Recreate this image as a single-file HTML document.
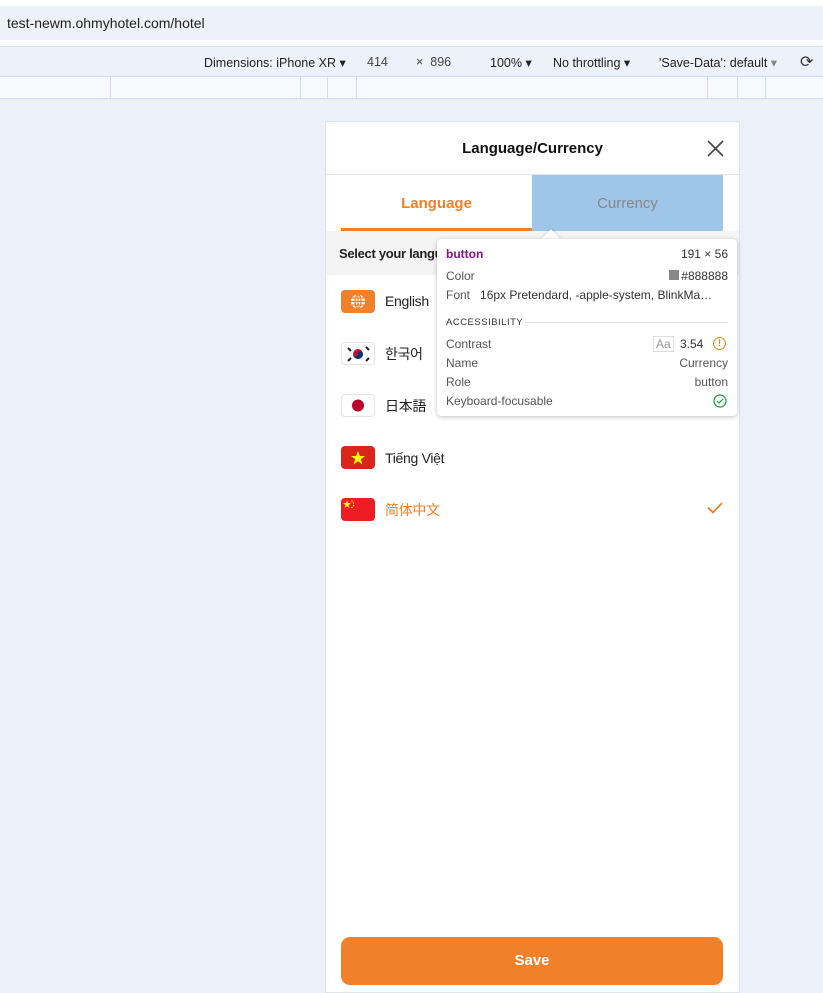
<!DOCTYPE html><html><head><style>
*{margin:0;padding:0;box-sizing:border-box}
body{width:823px;height:993px;background:#ecf0f8;font-family:"Liberation Sans","Noto Sans CJK KR",sans-serif;position:relative;overflow:hidden}
.a{position:absolute}
.flag{position:absolute;left:341px;width:34px;height:23px;border-radius:4px;overflow:hidden}
.lbl{position:absolute;left:385px;font-size:14px;color:#222;letter-spacing:-0.3px}
.tt{font-size:12px;color:#555}
</style></head><body>
<div class="a" style="left:0;top:0;width:823px;height:6px;background:#fff"></div>
<div class="a" style="left:0;top:6px;width:823px;height:34px;background:#edf1f9"></div>
<div class="a" style="left:7px;top:15px;font-size:14px;color:#222">test-newm.ohmyhotel.com/hotel</div>
<div class="a" style="left:0;top:40px;width:823px;height:6px;background:#fff"></div>
<div class="a" style="left:0;top:46px;width:823px;height:30px;background:#edf1f9;border-top:1px solid #dde2ea"></div>
<div class="a" style="left:204px;top:55px;font-size:12.5px;color:#222;white-space:nowrap">Dimensions: iPhone XR ▾</div>
<div class="a" style="left:367px;top:55px;font-size:12.5px;color:#444;white-space:nowrap">414</div>
<div class="a" style="left:416px;top:55px;font-size:12.5px;color:#444;white-space:nowrap">×&nbsp; 896</div>
<div class="a" style="left:490px;top:55px;font-size:12.5px;color:#222;white-space:nowrap">100% ▾</div>
<div class="a" style="left:553px;top:55px;font-size:12.5px;color:#222;white-space:nowrap">No throttling ▾</div>
<div class="a" style="left:659px;top:55px;font-size:12.5px;color:#222;white-space:nowrap">'Save-Data': default <span style="color:#888">▾</span></div>
<div class="a" style="left:800px;top:52px;font-size:16px;color:#333">⟳</div>
<div class="a" style="left:0;top:76px;width:823px;height:23px;background:#f7f9fd;border-top:1px solid #cfdcf2;border-bottom:1px solid #cfdcf2"></div>
<div class="a" style="left:110px;top:77px;width:1px;height:21px;background:#cfdcf2"></div>
<div class="a" style="left:300px;top:77px;width:1px;height:21px;background:#cfdcf2"></div>
<div class="a" style="left:327px;top:77px;width:1px;height:21px;background:#cfdcf2"></div>
<div class="a" style="left:356px;top:77px;width:1px;height:21px;background:#cfdcf2"></div>
<div class="a" style="left:707px;top:77px;width:1px;height:21px;background:#cfdcf2"></div>
<div class="a" style="left:737px;top:77px;width:1px;height:21px;background:#cfdcf2"></div>
<div class="a" style="left:765px;top:77px;width:1px;height:21px;background:#cfdcf2"></div>

<div class="a" style="left:325px;top:121px;width:415px;height:872px;background:#fff;border:1px solid #dfe3ea"></div>
<div class="a" style="left:325px;top:140px;width:415px;text-align:center;font-size:15px;font-weight:bold;color:#111">Language/Currency</div>
<svg class="a" style="left:707px;top:140px" width="17" height="17"><path d="M1 1L16 16M16 1L1 16" stroke="#444" stroke-width="1.6"/></svg>
<div class="a" style="left:326px;top:174px;width:413px;height:1px;background:#e5e5e5"></div>
<div class="a" style="left:341px;top:195px;width:191px;text-align:center;font-size:15px;font-weight:bold;color:#f0812a">Language</div>
<div class="a" style="left:341px;top:228px;width:191px;height:3px;background:#f0812a"></div>
<div class="a" style="left:532px;top:175px;width:191px;height:56px;background:#9fc5e8"></div>
<div class="a" style="left:532px;top:195px;width:191px;text-align:center;font-size:15px;color:#888">Currency</div>
<div class="a" style="left:326px;top:231px;width:413px;height:44px;background:#f4f4f4"></div>
<div class="a" style="left:339px;top:246px;font-size:13px;font-weight:bold;color:#222;letter-spacing:-0.3px">Select your langu</div>

<div class="flag" style="top:290px;background:#f0812a"><svg width="34" height="23"><circle cx="17" cy="11.5" r="7" fill="#fff"/><g stroke="#f0812a" stroke-width="1.2" fill="none"><ellipse cx="17" cy="11.5" rx="3" ry="7"/><path d="M10 11.5H24M11 8H23M11 15H23M17 4.5V18.5"/></g></svg></div>
<div class="lbl" style="top:293px">English</div>
<div class="flag" style="top:342px;border:1px solid #e5e5e5;background:#fff"><svg width="34" height="23"><circle cx="16" cy="11" r="5" fill="#c60c30"/><path d="M11 11a5 5 0 0 0 10 0a2.5 2.5 0 0 0-5 0a2.5 2.5 0 0 1-5 0z" fill="#003478"/><g stroke="#222" stroke-width="2"><path d="M6 5l3 3M24 4l3 3M6 18l3-3M24 18l3-3"/></g></svg></div>
<div class="lbl" style="top:344px">한국어</div>
<div class="flag" style="top:394px;border:1px solid #e5e5e5;background:#fff"><svg width="34" height="23"><circle cx="16" cy="10.5" r="6" fill="#bc002d"/></svg></div>
<div class="lbl" style="top:396px">日本語</div>
<div class="flag" style="top:446px;background:#da251d"><svg width="34" height="23"><polygon points="17,5 18.8,10 24,10 19.8,13.2 21.4,18.5 17,15.3 12.6,18.5 14.2,13.2 10,10 15.2,10" fill="#ffff00"/></svg></div>
<div class="lbl" style="top:450px">Tiếng Việt</div>
<div class="flag" style="top:498px;background:#ee1c25"><svg width="34" height="23"><polygon points="6,2 7,5 10,5 7.6,7 8.5,10 6,8.2 3.5,10 4.4,7 2,5 5,5" fill="#ff0"/><circle cx="11" cy="3" r=".8" fill="#ff0"/><circle cx="12.5" cy="5" r=".8" fill="#ff0"/><circle cx="12.5" cy="7.5" r=".8" fill="#ff0"/><circle cx="11" cy="9.5" r=".8" fill="#ff0"/></svg></div>
<div class="lbl" style="top:500px;color:#f0812a;font-family:'Liberation Sans','Noto Sans CJK SC',sans-serif">简体中文</div>
<svg class="a" style="left:707px;top:502px" width="16" height="12"><path d="M1 5.5L6 10.5L15 1" stroke="#f0812a" stroke-width="1.8" fill="none"/></svg>

<div class="a" style="left:341px;top:937px;width:382px;height:48px;background:#f0812a;border-radius:9px;color:#fff;font-weight:bold;font-size:15px;text-align:center;line-height:48px">Save</div>

<div class="a" style="left:544px;top:232px;width:14px;height:14px;background:#fff;transform:rotate(45deg);box-shadow:-1px -1px 2px rgba(0,0,0,.1)"></div>
<div class="a" style="left:437px;top:239px;width:300px;height:177px;background:#fff;border-radius:4px;box-shadow:0 1px 5px rgba(0,0,0,.25)"></div>
<div class="a tt" style="left:446px;top:247px;color:#881280;font-weight:bold">button</div>
<div class="a tt" style="left:600px;top:247px;width:128px;text-align:right;color:#333">191 × 56</div>
<div class="a tt" style="left:446px;top:269px">Color</div>
<div class="a tt" style="left:600px;top:269px;width:128px;text-align:right;color:#333"><span style="display:inline-block;width:10px;height:10px;background:#888;margin-right:2px"></span>#888888</div>
<div class="a tt" style="left:446px;top:288px;white-space:nowrap">Font&nbsp;&nbsp; <span style="color:#333">16px Pretendard, -apple-system, BlinkMa…</span></div>
<div class="a" style="left:446px;top:317px;font-size:9.5px;color:#333;letter-spacing:.5px">ACCESSIBILITY</div>
<div class="a" style="left:525px;top:322px;width:203px;height:1px;background:#ddd"></div>
<div class="a tt" style="left:446px;top:337px">Contrast</div>
<div class="a tt" style="left:653px;top:336px;border:1px solid #ddd;padding:0 2px;color:#999">Aa</div>
<div class="a tt" style="left:680px;top:337px;color:#333">3.54</div>
<div class="a" style="left:713px;top:337px;width:13px;height:13px;border:1.3px solid #e8830e;border-radius:50%;font-size:9px;color:#e8830e;text-align:center;line-height:11px;font-weight:bold">!</div>
<div class="a tt" style="left:446px;top:356px">Name</div>
<div class="a tt" style="left:600px;top:356px;width:128px;text-align:right">Currency</div>
<div class="a tt" style="left:446px;top:375px">Role</div>
<div class="a tt" style="left:600px;top:375px;width:128px;text-align:right">button</div>
<div class="a tt" style="left:446px;top:394px">Keyboard-focusable</div>
<svg class="a" style="left:713px;top:394px" width="14" height="14"><circle cx="7" cy="7" r="6" stroke="#1a9a3a" stroke-width="1.2" fill="none"/><path d="M4 7l2 2 4-4" stroke="#1a9a3a" stroke-width="1.2" fill="none"/></svg>
</body></html>
